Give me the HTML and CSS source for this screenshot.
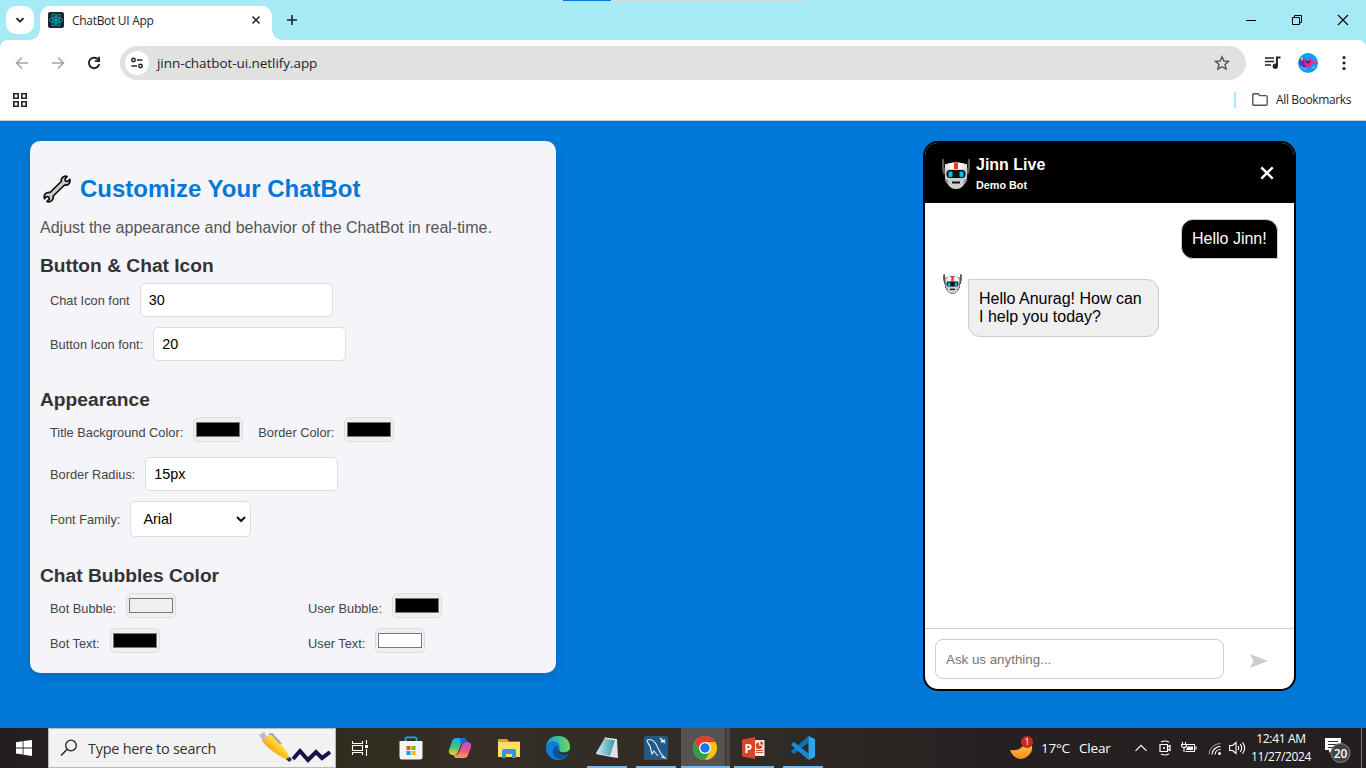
FILE: index.html
```
<!DOCTYPE html>
<html lang="en">
<head>
<meta charset="utf-8">
<title>ChatBot UI App</title>
<link rel="stylesheet" href="styles.css">
</head>
<body>
<svg class="defs" width="0" height="0">
  <symbol id="robot" viewBox="0 0 30 32">
    <path d="M1 1h1.800l.6 9 1.600 1v6l-2.500-1Q1 14 1 8zM29 1h-1.800l-.6 9-1.600 1v6l2.500-1Q29 14 29 8z" fill="#5c5c5c"/>
    <path d="M4 6.500Q9 4.500 15 4.500T26 6.500V17Q26.500 22 24 25 21 31 15 31T6 25Q3.500 22 4 17Z" fill="#cdcdcd"/>
    <path d="M4 6.500Q9 4.500 15 4.500T26 6.500V11H4z" fill="#e6e6e6"/>
    <path d="M9 5.200Q15 4 21 5.200V11H9z" fill="#fafafa"/>
    <path d="M13 4.500h4V11h-4z" fill="#f03a17"/>
    <path d="M4 20q0 4 3 6l1 1-1-5zM26 20q0 4-3 6l-1 1 1-5z" fill="#9b9b9b"/>
    <rect x="5.500" y="12" width="19" height="8" rx="3.500" fill="#111"/>
    <rect x="7.500" y="13.500" width="4" height="5.500" rx="1" fill="#00c0f0"/><rect x="18.500" y="13.500" width="4" height="5.500" rx="1" fill="#00c0f0"/>
    <path d="M11 23.500h8v2h-8z" fill="#111"/>
  </symbol>
</svg>

<header class="browser">
  <div class="tabstrip">
    <button class="tab-search"><svg width="10" height="10" viewBox="0 0 10 10"><path d="M1.500 3.200 5 6.700 8.500 3.200" fill="none" stroke="#222" stroke-width="1.800"/></svg></button>
    <div class="tab">
      <svg class="favicon" width="16" height="16" viewBox="0 0 16 16"><rect width="16" height="16" rx="2" fill="#20232a"/><g fill="none" stroke="#00a8c0" stroke-width=".9"><ellipse cx="8" cy="8" rx="6.600" ry="2.500"/><ellipse cx="8" cy="8" rx="6.600" ry="2.500" transform="rotate(60 8 8)"/><ellipse cx="8" cy="8" rx="6.600" ry="2.500" transform="rotate(120 8 8)"/></g><circle cx="8" cy="8" r="1.300" fill="#00c8e0"/></svg>
      <span class="tab-title">ChatBot UI App</span>
      <svg width="10" height="10" viewBox="0 0 10 10"><path d="M1.500 1.500l7 7M8.500 1.500l-7 7" stroke="#222" stroke-width="1.500"/></svg>
    </div>
    <svg class="new-tab" width="12" height="12" viewBox="0 0 12 12"><path d="M6 1v10M1 6h10" stroke="#222" stroke-width="1.600"/></svg>
    <div class="load-line"><i></i></div>
    <div class="window-controls">
      <svg width="12" height="12" viewBox="0 0 12 12"><path d="M1 6.500h10" stroke="#000"/></svg>
      <svg width="12" height="12" viewBox="0 0 12 12"><path d="M1.500 3.500h7v7h-7zM3.500 3.500v-2h7v7h-2" fill="none" stroke="#000"/></svg>
      <svg width="12" height="12" viewBox="0 0 12 12"><path d="M1 1l10 10M11 1 1 11" stroke="#000" stroke-width="1.100"/></svg>
    </div>
  </div>
  <div class="toolbar">
    <svg class="nav" width="14" height="14" viewBox="0 0 14 14"><path d="M13 7H2M7 1.500 1.500 7 7 12.500" fill="none" stroke="#a5a5a5" stroke-width="1.600"/></svg>
    <svg class="nav" width="14" height="14" viewBox="0 0 14 14"><path d="M1 7h11M7 1.500 12.500 7 7 12.500" fill="none" stroke="#a5a5a5" stroke-width="1.600"/></svg>
    <svg class="nav" width="14" height="14" viewBox="0 0 14 14"><path d="M11.500 4.200A5.200 5.200 0 1 0 12.200 8" fill="none" stroke="#222" stroke-width="1.900"/><path d="M13 .8V6H7.800V4.200h3.400V.8z" fill="#222"/></svg>
    <div class="omnibox">
      <span class="site-info"><svg width="14" height="14" viewBox="0 0 14 14"><g fill="none" stroke="#222" stroke-width="1.500"><circle cx="3.500" cy="4" r="1.700"/><path d="M7 4h5.500M1.500 10H7"/><circle cx="10.500" cy="10" r="1.700"/></g></svg></span>
      <span class="url">jinn-chatbot-ui.netlify.app</span>
      <svg width="16" height="16" viewBox="0 0 16 16"><path d="M8 1.700l1.900 4.300 4.700.4-3.600 3.100 1.100 4.600L8 11.700l-4.100 2.400L5 9.500 1.400 6.400l4.700-.4z" fill="none" stroke="#555" stroke-width="1.400"/></svg>
    </div>
    <svg class="media" width="16" height="14" viewBox="0 0 16 14"><path d="M0 2h9M0 5.500h9M0 9h6" stroke="#222" stroke-width="1.700"/><path d="M15.500 1.500h-3.600v8.500" fill="none" stroke="#222" stroke-width="2"/><circle cx="10.300" cy="10.200" r="2.600" fill="#222"/></svg>
    <svg class="avatar" width="20" height="20" viewBox="0 0 20 20"><circle cx="10" cy="10" r="10" fill="#109ff0"/><path d="M1 7l4-1 3 1 1 3-1 4-3 1-3-3z" fill="#6a28c8"/><path d="M6 7l3 2 3-4 3 2 0 2 5 0v1l-5 1-3 3-4 0-1-2z" fill="#f0288c"/><path d="M3 4l2 1v3l-2-1z" fill="#ffb000"/><path d="M8 8l2 2 2-2" fill="none" stroke="#321040" stroke-width="1.200"/><path d="M3 13q2 3 5 3M14 15l3-1" stroke="#70cfff" fill="none"/></svg>
    <svg class="kebab" width="4" height="16" viewBox="0 0 4 16"><g fill="#222"><circle cx="2" cy="2.500" r="1.600"/><circle cx="2" cy="8" r="1.600"/><circle cx="2" cy="13.500" r="1.600"/></g></svg>
  </div>
  <div class="bookmarks">
    <svg width="14" height="14" viewBox="0 0 14 14"><path d="M.8.800h4.400v4.400H.8zM8.800.800h4.400v4.400H8.800zM.8 8.800h4.400v4.400H.8zM8.800 8.800h4.400v4.400H8.800z" fill="none" stroke="#222" stroke-width="1.600"/></svg>
    <span class="bm-divider"></span>
    <svg class="folder" width="16" height="13" viewBox="0 0 16 13"><path d="M.8 11V2q0-1.200 1.200-1.200h4L7.800 2.600H14q1.200 0 1.200 1.200V11q0 1.200-1.200 1.200H2Q.8 12.200.8 11z" fill="none" stroke="#555" stroke-width="1.400"/></svg>
    <span class="bm-label">All Bookmarks</span>
  </div>
</header>

<main class="page">
  <section class="panel">
    <h2 class="title"><svg width="28" height="28" viewBox="0 0 28 28"><path d="M18.200 6.500Q18 3 20.500 1.800 22.500.700 24 1.500L22 4.300l.6 1.900 2 .3L26.800 4.300Q27.600 7.500 25.500 9.200 23.800 10.500 21.500 10L10.200 21Q10.800 24 8.800 25.700 6.500 27.500 4 26.500L6.300 24 5.700 22l-2-.5L1.500 23.700Q.5 20.500 2.500 18.700 4.500 17 7 17.500Z" fill="#ccc" stroke="#0c0c0c" stroke-width="1.700" stroke-linejoin="round"/></svg><span>Customize Your ChatBot</span></h2>
    <p class="lead">Adjust the appearance and behavior of the ChatBot in real-time.</p>

    <h3>Button &amp; Chat Icon</h3>
    <div class="field"><label>Chat Icon font</label><input class="text" type="text" value="30"></div>
    <div class="field"><label>Button Icon font:</label><input class="text" type="text" value="20"></div>

    <h3 class="spaced">Appearance</h3>
    <div class="field colors"><label>Title Background Color:</label><span class="swatch"><i class="black"></i></span><label class="second">Border Color:</label><span class="swatch"><i class="black"></i></span></div>
    <div class="field after-colors"><label>Border Radius:</label><input class="text" type="text" value="15px"></div>
    <div class="field"><label>Font Family:</label><span class="select">Arial<svg width="10" height="8" viewBox="0 0 10 8"><path d="M1 2l4 4 4-4" fill="none" stroke="#111" stroke-width="2"/></svg></span></div>

    <h3 class="spaced">Chat Bubbles Color</h3>
    <div class="bubble-grid">
      <div class="field colors"><label>Bot Bubble:</label><span class="swatch"><i class="grey"></i></span></div>
      <div class="field colors"><label>User Bubble:</label><span class="swatch"><i class="black"></i></span></div>
      <div class="field colors"><label>Bot Text:</label><span class="swatch"><i class="black"></i></span></div>
      <div class="field colors"><label>User Text:</label><span class="swatch"><i class="white"></i></span></div>
    </div>
  </section>

  <section class="chat">
    <div class="chat-head">
      <svg width="30" height="32"><use href="#robot"/></svg>
      <div class="names"><strong>Jinn Live</strong><small>Demo Bot</small></div>
      <svg class="close" width="14" height="14" viewBox="0 0 14 14"><path d="M1.300 1.300l11.400 11.400M12.700 1.300 1.300 12.700" stroke="#fff" stroke-width="2.400"/></svg>
    </div>
    <div class="messages">
      <div class="bubble user">Hello Jinn!</div>
      <div class="bot-row"><svg class="outlined" width="19" height="20"><use href="#robot"/></svg><div class="bubble bot">Hello Anurag! How can I help you today?</div></div>
    </div>
    <div class="composer">
      <input type="text" placeholder="Ask us anything...">
      <svg width="18" height="14" viewBox="0 0 18 14"><path d="M0 0l18 7-18 7 3.500-7z" fill="#ccc"/></svg>
    </div>
  </section>
</main>

<footer class="taskbar">
  <div class="slot start"><svg width="16" height="16" viewBox="0 0 16 16"><path d="M0 2.300l6.700-1v6.200H0zM7.500 1.100 16 0v7.500H7.500zM0 8.400h6.700v6.200l-6.700-1zM7.500 8.400H16V16l-8.500-1.200z" fill="#fff"/></svg></div>
  <div class="search">
    <svg width="18" height="18" viewBox="0 0 18 18"><circle cx="11" cy="6.500" r="5.300" fill="none" stroke="#222" stroke-width="1.300"/><path d="M7.200 10.200 1 16.500" stroke="#222" stroke-width="1.400"/></svg>
    <span>Type here to search</span>
    <svg class="pen" width="74" height="34" viewBox="0 0 74 34"><defs><linearGradient id="pen" x1="0" y1="1" x2="1" y2="0"><stop offset=".3" stop-color="#f0a000"/><stop offset=".6" stop-color="#ffd83a"/></linearGradient></defs><path d="M1 4l5-3 4 6-5 3z" fill="#c5b6d4"/><path d="M4 10l7-6q5 1 9 6l9 11 3 6-3 2-7-4Q10 18 4 10z" fill="url(#pen)"/><path d="M11 3.500l3-.5 9 10" fill="none" stroke="#a9a0b8" stroke-width="2"/><path d="M28 28l4-2 2 3-3 2z" fill="#3a2b55"/><path d="M35 28l7-8 8 9 8-8 6 6 8-6" fill="none" stroke="#1a1045" stroke-width="4"/></svg>
  </div>
  <div class="slot taskview"><svg width="18" height="16" viewBox="0 0 18 16"><path d="M1.500 1v2.500h10V1M1.500 15v-2.500h10V15M1.500 5.500h10v5h-10zM15.500 0v4M15.500 9v7" fill="none" stroke="#fff" stroke-width="1.100"/><path d="M14 5h3v3h-3z" fill="#fff"/></svg></div>
  <div class="slot"><svg width="24" height="24" viewBox="0 0 24 24"><path d="M6.500 6V3q0-1.700 1.700-1.700h7.600q1.700 0 1.700 1.700v3" fill="none" stroke="#1ca5e2" stroke-width="1.800"/><path d="M.5 5h23v16q0 2.500-2.500 2.500H3Q.5 23.500.5 21z" fill="#f2f4f6"/><path d="M7.500 10h4v4h-4z" fill="#f04e23"/><path d="M12.500 10h4v4h-4z" fill="#7db700"/><path d="M7.500 15h4v4h-4z" fill="#00a1f1"/><path d="M12.500 15h4v4h-4z" fill="#fdb900"/></svg></div>
  <div class="slot"><svg width="24" height="22" viewBox="0 0 24 22"><defs><linearGradient id="ca" x1="0" y1="0" x2="0" y2="1"><stop offset="0" stop-color="#17a5e8"/><stop offset=".55" stop-color="#48c27a"/><stop offset="1" stop-color="#f3cf25"/></linearGradient><linearGradient id="cb" x1="0" y1="0" x2="0" y2="1"><stop offset="0" stop-color="#a85ae0"/><stop offset=".55" stop-color="#f45284"/><stop offset="1" stop-color="#ffa04b"/></linearGradient></defs><path d="M8 1h7q3 0 3.800 4h-3q-2 0-3 3L10 15q-1 3-4 3H4q-4-1-3-5L4 4Q5 1 8 1z" fill="url(#ca)"/><path d="M16 21H9q-3 0-3.500-3H8q2 0 3-3l3-7q1-3 4-3h2q4 1 3 5l-3 8q-1 3-4 3z" fill="url(#cb)"/><path d="M12 1h3q3 0 3.800 4h-3q-2 0-3 2z" fill="#1768ce"/></svg></div>
  <div class="slot"><svg width="22" height="19" viewBox="0 0 22 19"><path d="M0 1q0-1 1-1h8l2 2.500H22V18H0z" fill="#e8a30c"/><path d="M0 3h22v15H0z" fill="#ffdc6c"/><path d="M4 19v-7q0-2 2-2h10q2 0 2 2v7h-4v-4H8v4z" fill="#3795df"/></svg></div>
  <div class="slot"><svg width="24" height="24" viewBox="0 0 24 24"><defs><linearGradient id="ed"><stop stop-color="#169be0"/><stop offset="1" stop-color="#69dc58"/></linearGradient></defs><circle cx="12" cy="12" r="12" fill="#107cd3"/><path d="M0 12Q1 4 9 5.500q5 1 4.500 7-1 4 4 4Q24 16 24 11 23 0 12 0 1 0 0 12z" fill="url(#ed)"/><path d="M9 10q-5 7 1 12 7 3 12-4-4 2-8 0-4-2-2-6 1-2-3-2z" fill="#0b539e"/><path d="M13.500 12.500q-2 4 4 4 4 0 6.500-3l-.4 2.500-1.600 2q-4 2-8 0-4-3-.500-5.500z" fill="#302f2f"/></svg></div>
  <div class="slot open"><svg width="22" height="22" viewBox="0 0 22 22"><defs><linearGradient id="note"><stop stop-color="#c7edf3"/><stop offset="1" stop-color="#3796a7"/></linearGradient></defs><path d="M9 1l12 1 1 19-7-1L0 17z" fill="#dfe3e4"/><path d="M9 1l10 2-5 16L0 16z" fill="url(#note)"/><path d="M9 1l11 2" stroke="#fff" stroke-width="1.500" stroke-dasharray="1.500 1"/></svg></div>
  <div class="slot open"><svg width="24" height="24" viewBox="0 0 24 24"><rect width="24" height="24" rx="2" fill="#235a84"/><path d="M3 4q5-2 9 4 3 6 5 10l4 4-4-1M3 4q1 4 3 6l2 8 2-3 4 5" fill="none" stroke="#d7e8f2" stroke-width="1.200"/><path d="M16 2l5 5M17 6l4-2" stroke="#e5f1f7" stroke-width="1.600"/></svg></div>
  <div class="slot open active"><svg width="24" height="24" viewBox="0 0 24 24"><circle cx="12" cy="12" r="12" fill="#fbc116"/><path d="M1.600 6A12 12 0 0 1 22.400 6H12l-5.200 9z" fill="#e33b2e"/><path d="M1.600 6A12 12 0 0 0 12 24l5.200-9H6.800z" fill="#2aa147"/><circle cx="12" cy="12" r="6" fill="#fff"/><circle cx="12" cy="12" r="4.700" fill="#1a73e8"/></svg></div>
  <div class="slot open"><svg width="23" height="22" viewBox="0 0 23 22"><path d="M12 3h10.500v16H12z" fill="#f4e7e3"/><path d="M0 2.500 13 0v22L0 19.500z" fill="#d24726"/><text class="ppt" x="2.500" y="15.500">P</text><path d="M14 15.500h7M14 13.500h7" stroke="#d24726"/><path d="M17 5.500a3.200 3.200 0 1 0 3.200 3.200H17zM18.300 4.500v3h3a3 3 0 0 0-3-3z" fill="#d24726"/></svg></div>
  <div class="slot open"><svg width="24" height="24" viewBox="0 0 24 24"><path d="M17.500 0v6.500L3 18 .5 16.500v-1.800z" fill="#0873b9"/><path d="M.5 9.300v-1.800L3 6l14.500 11.500V24z" fill="#148bd3"/><path d="M17.500 0 24 3v18l-6.500 3z" fill="#28a7ee"/></svg></div>

  <div class="tray">
    <svg class="moon" width="24" height="24" viewBox="0 0 24 24"><defs><linearGradient id="mo" x1="0" y1="0" x2="0" y2="1"><stop stop-color="#ffca45"/><stop offset="1" stop-color="#f68b1c"/></linearGradient></defs><path d="M0 14q10 2 15-7l7 3q1 5-3 9-4 4-9 4-7-1-10-9z" fill="url(#mo)"/><circle cx="17" cy="6" r="6" fill="#c42b1c"/><text class="count" x="14.500" y="9.300">1</text></svg>
    <span class="weather">17°C</span><span class="weather sky">Clear</span>
    <svg class="t-chevron" width="12" height="8" viewBox="0 0 12 8"><path d="M.5 6.800 6 1.300l5.500 5.500" fill="none" stroke="#fff" stroke-width="1.200"/></svg>
    <svg class="t-meet" width="12" height="16" viewBox="0 0 12 16"><path d="M1 4.500h7.500v7H1zM8.500 7l2.500-1.500v5L8.500 9zM2 2q4-2 8 0M2 14q4 2 8 0" fill="none" stroke="#fff" stroke-width="1.200"/><circle cx="5" cy="8" r="1" fill="#fff"/></svg>
    <svg class="t-battery" width="16" height="12" viewBox="0 0 16 12"><path d="M6 2.500h7.500v7H4.500M15 4.500v3M1.500 0v2.500M4.500 0v2.500M.5 2.500h5v1q0 2-2.500 2T.5 3.500zM3 5.500V10" fill="none" stroke="#fff" stroke-width="1.100"/><path d="M6.500 4.500h5.500V8H5z" fill="#fff"/></svg>
    <svg class="t-wifi" width="13" height="13" viewBox="0 0 13 13"><path d="M1 12.500A11.500 11.500 0 0 1 12.500 1.500" fill="none" stroke="#aaa"/><path d="M4 12.500a8.500 8.500 0 0 1 8.500-8M7 12.500a5.500 5.500 0 0 1 5.500-5" fill="none" stroke="#fff" stroke-width="1.200"/><circle cx="11.500" cy="11.500" r="1.500" fill="#fff"/></svg>
    <svg class="t-sound" width="17" height="14" viewBox="0 0 17 14"><path d="M.6 4.500h3L7 1.500v11L3.600 9.500h-3zM9 5q1.400 2 0 4M11.200 3.200q3 3.800 0 7.600M13.400 1.400q4.600 5.600 0 11.200" fill="none" stroke="#fff" stroke-width="1.100"/></svg>
    <div class="clock"><span class="time">12:41 AM</span><span class="date">11/27/2024</span></div>
    <svg class="t-notify" width="28" height="26" viewBox="0 0 28 26"><path d="M0 1h16v12H7l-3 3v-3H0z" fill="#fff"/><path d="M3 4.500h10M3 7.500h10M3 10.500h7" stroke="#333"/><circle cx="15.500" cy="16" r="9.500" fill="#414345" stroke="#85878a"/><text class="badge" x="8.700" y="20.500">20</text></svg>
    <i class="peek"></i>
  </div>
</footer>
</body>
</html>
```
FILE: styles.css
```
* { box-sizing: border-box; }
html, body { margin: 0; width: 1366px; height: 768px; overflow: hidden; }
body { display: flex; flex-direction: column; font-family: "Liberation Sans", Arial, sans-serif; background: #0078d7; }
svg { display: block; flex: none; }
.defs { position: absolute; }

.browser { height: 121px; flex: none; background: #a6eaf5; font-family: "Open Sans", "Noto Sans", sans-serif; color: #1f1f1f; }
.tabstrip { height: 40px; display: flex; position: relative; }
.tab-search { width: 28px; height: 28px; margin: 6px 6px 0; padding: 0; border: 0; border-radius: 10px; background: #fff; display: grid; place-items: center; }
.tab { width: 232px; height: 34px; margin-top: 6px; padding: 0 11px 6px 8px; background: #fff; border-radius: 10px 10px 0 0; display: flex; align-items: center; position: relative; }
.tab::before, .tab::after { content: ""; position: absolute; bottom: 0; width: 10px; height: 10px; }
.tab::before { left: -10px; background: radial-gradient(circle at 0 0, transparent 9.500px, #fff 10px); }
.tab::after { right: -10px; background: radial-gradient(circle at 100% 0, transparent 9.500px, #fff 10px); }
.tab-title { flex: 1; margin-left: 8px; font-size: 12px; letter-spacing: -.3px; }
.new-tab { margin: 14px 0 0 14px; }
.load-line { position: absolute; left: 563px; top: 0; width: 241px; height: 1px; background: #ddd; }
.load-line i { display: block; width: 48px; height: 1px; background: #0078d7; }
.window-controls { margin: 14px 17px 0 auto; display: flex; gap: 34px; }
.toolbar { height: 46px; background: #fff; border-radius: 8px 8px 0 0; display: flex; align-items: center; padding-left: 15px; }
.nav { margin-right: 22px; }
.omnibox { width: 1126px; height: 34px; margin-left: -3px; border-radius: 17px; background: #e1e1e1; display: flex; align-items: center; padding: 0 16px 0 5px; }
.site-info { width: 24px; height: 24px; border-radius: 50%; background: #fff; display: grid; place-items: center; }
.url { flex: 1; margin-left: 8px; font-size: 13.500px; letter-spacing: -.06px; }
.media { margin-left: 19px; }
.avatar { margin-left: 17px; }
.kebab { margin-left: 24px; }
.bookmarks { height: 35px; background: #fff; border-bottom: 1px solid #c9c9c9; display: flex; align-items: center; padding: 0 14px 7px 13px; }
.bm-divider { width: 2px; height: 16px; background: #a6eaf5; margin-left: auto; }
.folder { margin-left: 16px; }
.bm-label { width: 76px; margin-left: 8px; font-size: 12px; letter-spacing: -.37px; white-space: nowrap; }

.page { height: 607px; flex: none; background: #0078d7; padding: 20px 70px 0 30px; display: flex; justify-content: space-between; align-items: flex-start; }
.panel { width: 526px; height: 532px; background: #f4f4f9; border-radius: 10px; padding: 30px 10px 0; box-shadow: 0 4px 8px rgba(0,0,0,.1); color: #333; }
.title { margin: 0; height: 36px; display: flex; align-items: center; color: #0078d7; font-size: 24px; line-height: 36px; }
.title svg { margin: 0 9px 0 3px; }
.lead { margin: 11px 0 0; height: 20px; font-size: 16px; line-height: 20px; color: #555; white-space: nowrap; }
h3 { margin: 16px 0 0; height: 24px; font-size: 19.200px; line-height: 24px; }
.lead + h3 + .field { margin-top: 5px; }
.field { display: flex; align-items: center; margin: 10px 0 0 10px; font-size: 12.800px; color: #444; }
.field label { white-space: nowrap; margin-right: 10px; }
.text { width: 193px; height: 34px; padding: 0 8px; border: 1px solid #ddd; border-radius: 5px; background: #fff; font: 14.400px "Liberation Sans", Arial, sans-serif; color: #000; }
.spaced { margin-top: 27px; }
.field.colors { height: 25px; margin-top: 5px; }
.colors label { padding-top: 5px; }
.colors .second { margin-left: 15px; }
.swatch { width: 50px; height: 25px; flex: none; border: 1px solid #ddd; border-radius: 5px; background: #efefef; padding: 4px 2px; }
.swatch i { display: block; height: 15px; border: 1px solid #777; }
.swatch .black { background: #000; }
.swatch .grey { background: #efefef; }
.swatch .white { background: #fff; }
.field.after-colors { margin-top: 15px; }
.select { width: 121px; height: 36px; border: 1px solid #ddd; border-radius: 5px; background: #fff; color: #000; font-size: 14.400px; display: flex; align-items: center; justify-content: space-between; padding: 0 4px 0 12px; }
.bubble-grid { display: grid; grid-template-columns: 258px 1fr; row-gap: 10px; margin-top: 5px; }
.bubble-grid .field.colors { margin-top: 0; }

.chat { width: 373px; height: 550px; border: 2px solid #000; border-radius: 15px; background: #fff; overflow: hidden; display: flex; flex-direction: column; }
.chat-head { height: 60px; flex: none; background: #000; color: #fff; display: flex; padding: 15px 20px 0 16px; }
.names { margin-left: 5px; margin-top: -3px; display: flex; flex-direction: column; }
.names strong { font-size: 16px; line-height: 20px; }
.names small { font-size: 10.800px; line-height: 14px; font-weight: bold; margin-top: 3px; }
.close { margin: 8px 0 0 auto; }
.messages { flex: 1; padding: 16px 16px 0 18px; display: flex; flex-direction: column; }
.bubble { border: 1px solid #ccc; font-size: 16px; line-height: 18px; padding: 10px; }
.bubble.user { align-self: flex-end; width: 97px; height: 40px; background: #000; color: #fff; border-radius: 12px 12px 0 12px; white-space: nowrap; }
.bot-row { display: flex; margin-top: 15px; }
.outlined { filter: drop-shadow(0 0 .6px #000) drop-shadow(0 0 .4px #000); }
.bubble.bot { width: 191px; height: 58px; margin: 5px 0 0 6px; background: #efefef; color: #000; border-radius: 0 12px 12px 12px; }
.composer { height: 61px; border-top: 1px solid #ccc; padding: 10px; display: flex; align-items: flex-start; }
.composer input { width: 289px; height: 40px; border: 1px solid #ccc; border-radius: 8px; padding: 0 10px; font: 13.333px "Liberation Sans", Arial, sans-serif; background: #fff; }
.composer input::placeholder { color: #757575; }
.composer svg { margin: 15px 0 0 26px; }

.taskbar { height: 40px; flex: none; display: flex; background: linear-gradient(90deg, #231f20, #302d20 28%, #352e27 34%, #302c27 55%, #272021 72%, #231f20); font-family: "Open Sans", "Noto Sans", sans-serif; color: #fff; }
.slot { width: 49px; height: 40px; padding-right: 2px; display: grid; place-items: center; border-bottom: 2px solid transparent; position: relative; }
.slot svg { margin-top: 2px; }
.slot.start { width: 48px; padding: 0; }
.slot.taskview { width: 51px; padding-right: 3px; }
.slot.open::after { content: ""; position: absolute; left: 4px; right: 5px; bottom: -2px; height: 2px; background: #76b9ed; }
.slot.active { background: linear-gradient(90deg, #565452 44px, #343332 44px, #343332 45px, #4a4847 45px); border: 0; padding-bottom: 2px; }
.slot.active::after { left: 0; right: 0; bottom: 0; }
.search { width: 288px; height: 40px; border: 1px solid #b9b9b9; background: #f2f2f2; color: #333; display: flex; align-items: center; padding-left: 11px; font-size: 14.500px; letter-spacing: -.28px; white-space: nowrap; }
.search span { width: 132px; margin-left: 10px; }
.pen { margin-left: 38px; }
.tray { margin-left: auto; width: 358px; display: flex; align-items: center; }
.moon { margin-left: 2px; }
.weather { width: 30px; margin-left: 7px; font-size: 13.500px; letter-spacing: -.2px; white-space: nowrap; }
.weather.sky { width: 33px; margin-left: 8px; }
.t-chevron { margin-left: 23px; }
.t-meet { margin-left: 12px; }
.t-battery { margin-left: 10px; }
.t-wifi { margin-left: 11px; }
.t-sound { margin-left: 8px; }
.clock { width: 70px; display: flex; flex-direction: column; align-items: center; font-size: 12px; line-height: 18px; letter-spacing: -.35px; white-space: nowrap; }
.t-notify { margin-left: 9px; margin-top: 4px; }
.peek { width: 1px; height: 40px; background: #777; margin: 0 4px 0 auto; }
.ppt { font: bold 12px "Open Sans", sans-serif; fill: #fff; }
.count { font: 9px "Open Sans", sans-serif; fill: #fff; }
.badge { font: 600 12px "Open Sans", sans-serif; fill: #fff; }
```
